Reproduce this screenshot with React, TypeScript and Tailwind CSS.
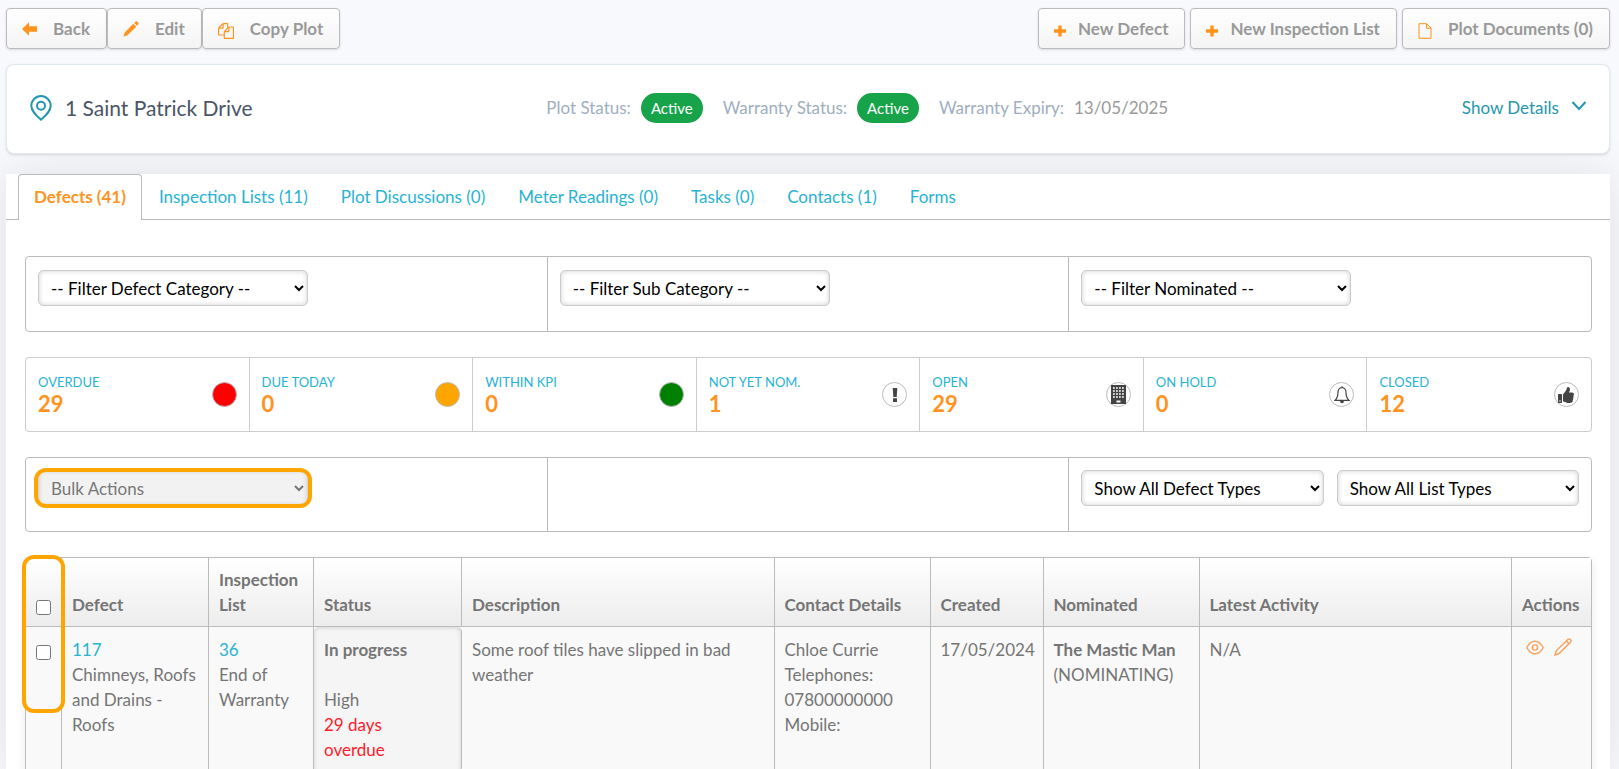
import type { ReactNode } from 'react'
import { FaThumbsUp } from 'react-icons/fa'

const tabs = [
  'Defects (41)',
  'Inspection Lists (11)',
  'Plot Discussions (0)',
  'Meter Readings (0)',
  'Tasks (0)',
  'Contacts (1)',
  'Forms',
]

type Stat = { label: string; value: number; dot: string; icon?: ReactNode }

const stats: Stat[] = [
  { label: 'OVERDUE', value: 29, dot: 'bg-[#ff0000]' },
  { label: 'DUE TODAY', value: 0, dot: 'bg-[#ffa500]' },
  { label: 'WITHIN KPI', value: 0, dot: 'bg-[#008000]' },
  { label: 'NOT YET NOM.', value: 1, dot: 'bg-white', icon: <AlertIcon /> },
  { label: 'OPEN', value: 29, dot: 'bg-white', icon: <BuildingIcon /> },
  { label: 'ON HOLD', value: 0, dot: 'bg-white', icon: <BellIcon /> },
  { label: 'CLOSED', value: 12, dot: 'bg-white', icon: <FaThumbsUp size={16} /> },
]

const th = 'border-r border-b border-[#bbb] px-[10px] py-[9px] align-bottom text-left font-bold last:border-r-0'
const td = 'border-r border-[#bbb] px-[10px] py-[10px] align-top last:border-r-0'

function BackIcon() {
  return (
    <svg width="15" height="14" viewBox="0 0 15 14" fill="currentColor">
      <path d="M0 7 7 .3V4.300H15V9.700H7V13.700Z" />
    </svg>
  )
}

function EditIcon() {
  return (
    <svg width="16" height="16" viewBox="0 0 16 16" fill="currentColor">
      <path d="M10.300 2.700 13.300 5.700 4.400 14.200 .4 15.700 1.700 11.500ZM11.200 1.900 12.700.6Q13.500 0 14.300.7L15.300 1.700Q16 2.500 15.300 3.300L14.100 4.800Z" />
    </svg>
  )
}

function CopyIcon() {
  return (
    <svg className="mt-1" width="16" height="16" viewBox="0 0 1792 1792" fill="currentColor">
      <path d="M1696 384q40 0 68 28t28 68v1216q0 40-28 68t-68 28h-960q-40 0-68-28t-28-68v-288h-544q-40 0-68-28t-28-68v-672q0-40 20-88t48-76l408-408q28-28 76-48t88-20h416q40 0 68 28t28 68v328q68-40 128-40h416zm-544 213l-299 299h299v-299zm-640-384l-299 299h299v-299zm196 647l316-316v-416h-384v416q0 40-28 68t-68 28h-416v640h512v-256q0-40 20-88t48-76zm956 804v-1152h-384v416q0 40-28 68t-68 28h-416v640h896z" />
    </svg>
  )
}

function PlusIcon() {
  return (
    <svg className="mt-1 -mr-1" width="12" height="12" viewBox="0 0 12 12" fill="currentColor">
      <path d="M4.300.5H7.700V4.300H12V7.700H7.700V11.500H4.300V7.700H0V4.300H4.300Z" />
    </svg>
  )
}

function FileIcon() {
  return (
    <svg className="mt-1" width="14" height="16" viewBox="0 0 14 16" fill="none" stroke="currentColor">
      <path d="M1 .7H8.700L13 5V15.300H1ZM8.500 1V5.300H13" />
    </svg>
  )
}

function AlertIcon() {
  return (
    <svg width="6" height="14" viewBox="0 0 6 14" fill="currentColor">
      <path d="M.7 0H5.300L4.700 9H1.300ZM1 10.300H5V14H1Z" />
    </svg>
  )
}

function BuildingIcon() {
  return (
    <svg width="15" height="19" viewBox="0 0 15 19">
      <path d="M0 0H15V19H0Z" fill="#444" />
      <path
        d="M2 3H13M2 6H13M2 9H13M2 12H13"
        stroke="#fff"
        strokeWidth="1.600"
        strokeDasharray="1.800 1.200"
      />
      <path d="M5.500 15.500H9.500V17.500H5.500Z" fill="#fff" />
    </svg>
  )
}

function BellIcon() {
  return (
    <svg width="16" height="18" viewBox="0 0 16 18" fill="none" stroke="#444" strokeWidth="1.200">
      <path d="M8 1.500C5.300 1.900 4 4 4 6.500 4 10.500 3 12.500 1 14.400H15C13 12.500 12 10.500 12 6.500 12 4 10.700 1.900 8 1.500ZM8 .3V1.500" />
      <path d="M6 15H10Q9.800 17.300 8 17.300T6 15Z" fill="#444" stroke="none" />
    </svg>
  )
}

function PinIcon() {
  return (
    <svg width="22" height="26" viewBox="0 0 22 26" fill="none" stroke="#2596b0" strokeWidth="2">
      <path d="M11 24.700C6.500 20.800 1.300 16.500 1.300 10.800A9.700 9.700 0 0 1 20.700 10.800C20.700 16.500 15.500 20.800 11 24.700Z" />
      <circle cx="11" cy="10.800" r="4" />
    </svg>
  )
}

function ToolButton({ icon, children }: { icon: ReactNode; children: ReactNode }) {
  return (
    <button className="flex h-[41px] items-center gap-4 rounded-[4px] border border-[#bbb] bg-gradient-to-b from-white to-[#f4f4f4] pr-4 pl-[15px] font-bold text-[#999] shadow-sm">
      <span className="text-[#ff931e]">{icon}</span>
      {children}
    </button>
  )
}

function Picker({ label, className = '', disabled = false }: { label: string; className?: string; disabled?: boolean }) {
  return (
    <select
      aria-label={label}
      disabled={disabled}
      className={`h-9 rounded-[5px] border border-[#ccc] px-2 shadow-[inset_0_0_5px_rgba(0,0,0,0.2)] ${
        disabled ? 'bg-[#f0f0f0] text-[#555] opacity-80' : 'bg-white text-black'
      } ${className}`}
    >
      <option>{label}</option>
    </select>
  )
}

function Status({ children }: { children: ReactNode }) {
  return (
    <dd className="rounded-full bg-[#16a34a] px-[10px] py-[2px] text-[15px] leading-[26px] text-white">{children}</dd>
  )
}

export default function App() {
  return (
    <div className="min-h-screen overflow-hidden bg-[#f8f9fd] px-[6px] pr-[9px] pt-2 font-['Lato',sans-serif] text-[17px] leading-[25px] text-[#757575]">
      <header className="flex justify-between">
        <div className="flex">
          <ToolButton icon={<BackIcon />}>Back</ToolButton>
          <ToolButton icon={<EditIcon />}>Edit</ToolButton>
          <ToolButton icon={<CopyIcon />}>Copy Plot</ToolButton>
        </div>
        <div className="flex gap-[5px]">
          <ToolButton icon={<PlusIcon />}>New Defect</ToolButton>
          <ToolButton icon={<PlusIcon />}>New Inspection List</ToolButton>
          <ToolButton icon={<FileIcon />}>Plot Documents (0)</ToolButton>
        </div>
      </header>

      <section className="relative z-10 mt-[15px] flex h-[90px] items-center justify-between rounded-lg border border-[#e2e8f0] bg-white pr-[22px] pb-[3px] pl-[23px] shadow-sm">
        <h1 className="flex items-center gap-[13px] text-[21px] text-[#4a5568]">
          <PinIcon />1 Saint Patrick Drive
        </h1>
        <dl className="flex items-center gap-5 text-[#a0aec0]">
          <div className="flex items-center gap-[10px]">
            <dt>Plot Status:</dt>
            <Status>Active</Status>
          </div>
          <div className="flex items-center gap-[10px]">
            <dt>Warranty Status:</dt>
            <Status>Active</Status>
          </div>
          <div className="flex items-center gap-[10px]">
            <dt>Warranty Expiry:</dt>
            <dd className="text-[#999]">13/05/2025</dd>
          </div>
        </dl>
        <button className="flex items-center gap-3 text-[#2596b0]">
          Show Details
          <svg className="mb-1" width="16" height="10" viewBox="0 0 16 10" fill="none" stroke="currentColor" strokeWidth="2">
            <path d="M1.500 1 8 8 14.500 1" />
          </svg>
        </button>
      </section>

      <main className="mt-5 bg-white shadow-[0_0_50px_rgba(0,0,0,0.1)]">
        <nav className="flex h-[46px] border-b border-[#bbb] pl-3">
          {tabs.map((tab, i) => (
            <a
              key={tab}
              href="#"
              className={
                i === 0
                  ? 'mr-px h-[46px] rounded-t-[4px] border border-b-0 border-[#bbb] bg-white px-[15px] pt-[9px] font-bold text-[#ff931e]'
                  : 'mr-px px-4 pt-[10px] text-[#27b3d3]'
              }
            >
              {tab}
            </a>
          ))}
        </nav>

        <div className="flex flex-col gap-[25px] pt-9 pr-[18px] pl-[19px]">
          <div className="grid h-[76px] grid-cols-3 divide-x divide-[#bbb] rounded-[4px] border border-[#bbb]">
            <div className="px-3 pt-[13px]">
              <Picker label="-- Filter Defect Category --" className="w-[270px]" />
            </div>
            <div className="px-3 pt-[13px]">
              <Picker label="-- Filter Sub Category --" className="w-[270px]" />
            </div>
            <div className="px-3 pt-[13px]">
              <Picker label="-- Filter Nominated --" className="w-[270px]" />
            </div>
          </div>

          <div className="grid h-[75px] grid-cols-7 divide-x divide-[#ccc] rounded-[4px] border border-[#ccc]">
            {stats.map((s) => (
              <a key={s.label} href="#" className="flex items-center justify-between px-3">
                <span className="flex flex-col pb-[2px]">
                  <span className="text-[13px] leading-5 text-[#27b3d3]">{s.label}</span>
                  <span className="text-[22px] leading-6 font-bold text-[#ff931e]">{s.value}</span>
                </span>
                <span className={`flex size-[25px] items-center justify-center rounded-full border border-[#bbb] text-[#444] ${s.dot}`}>
                  {s.icon}
                </span>
              </a>
            ))}
          </div>

          <div className="grid h-[75px] grid-cols-3 divide-x divide-[#bbb] rounded-[4px] border border-[#bbb]">
            <div className="px-3 pt-3">
              <div className="relative flex w-[270px]">
                <Picker label="Bulk Actions" className="w-full" disabled />
                <div className="pointer-events-none absolute -inset-x-1 -top-[2px] -bottom-[2px] rounded-xl border-4 border-[#ffa500]" />
              </div>
            </div>
            <div />
            <div className="flex gap-[13px] px-3 pt-3">
              <Picker label="Show All Defect Types" className="flex-1" />
              <Picker label="Show All List Types" className="flex-1" />
            </div>
          </div>

          <div className="relative rounded-t-[4px] border border-[#bbb] shadow-[0_4px_12px_rgba(0,0,0,0.08)]">
            <table className="w-full table-fixed border-separate border-spacing-0 rounded-t-[4px] bg-[#f9f9f9]">
              <colgroup>
                <col className="w-[36px]" />
                <col className="w-[147px]" />
                <col className="w-[105px]" />
                <col className="w-[148px]" />
                <col />
                <col className="w-[156px]" />
                <col className="w-[113px]" />
                <col className="w-[156px]" />
                <col />
                <col className="w-[79px]" />
              </colgroup>
              <thead className="bg-gradient-to-b from-white to-[#ececec]">
                <tr>
                  <th className={th}>
                    <input type="checkbox" aria-label="Select all defects" className="mb-[2px] block size-[15px]" />
                  </th>
                  <th className={th}>Defect</th>
                  <th className={th}>Inspection List</th>
                  <th className={th}>Status</th>
                  <th className={th}>Description</th>
                  <th className={th}>Contact Details</th>
                  <th className={th}>Created</th>
                  <th className={th}>Nominated</th>
                  <th className={th}>Latest Activity</th>
                  <th className={th}>Actions</th>
                </tr>
              </thead>
              <tbody>
                <tr>
                  <td className={td}>
                    <input type="checkbox" aria-label="Select defect 117" className="mt-2 block size-[15px]" />
                  </td>
                  <td className={td}>
                    <a href="#" className="block text-[#27b3d3]">117</a>
                    Chimneys, Roofs and Drains - Roofs
                  </td>
                  <td className={td}>
                    <a href="#" className="block text-[#27b3d3]">36</a>
                    End of Warranty
                  </td>
                  <td className={`${td} rounded-[5px] bg-[#f5f5f5] shadow-[inset_0_1px_4px_rgba(0,0,0,0.14)]`}>
                    <b className="mb-[25px] block">In progress</b>
                    High
                    <span className="block w-20 text-[#ff1a2b]">29 days overdue</span>
                  </td>
                  <td className={td}>Some roof tiles have slipped in bad weather</td>
                  <td className={td}>
                    Chloe Currie
                    <br />
                    Telephones:
                    <br />
                    07800000000
                    <br />
                    Mobile:
                  </td>
                  <td className={td}>17/05/2024</td>
                  <td className={td}>
                    <b className="block">The Mastic Man</b>
                    (NOMINATING)
                  </td>
                  <td className={td}>N/A</td>
                  <td className={td}>
                    <div className="flex items-center gap-[10px] pt-px pl-1 text-[#f9a05c]">
                      <button aria-label="View defect">
                        <svg width="18" height="15" viewBox="0 0 18 15" fill="none" stroke="currentColor" strokeWidth="1.400">
                          <path d="M.8 7.500Q4 1.200 9 1.200T17.200 7.500Q14 13.800 9 13.800T.8 7.500Z" />
                          <circle cx="9" cy="7.500" r="2.600" />
                        </svg>
                      </button>
                      <button aria-label="Edit defect">
                        <svg width="18" height="18" viewBox="0 0 18 18" fill="none" stroke="currentColor" strokeWidth="1.400">
                          <path d="M1 17 2.200 12.800 13.800 1.400Q15 .4 16.300 1.600T16.500 4.200L5 15.600ZM12.300 3 15 5.700" />
                        </svg>
                      </button>
                    </div>
                  </td>
                </tr>
              </tbody>
            </table>
            <div className="pointer-events-none absolute -top-[3px] -left-1 h-[158px] w-[43px] rounded-xl border-4 border-[#ffa500]" />
          </div>
        </div>
      </main>
    </div>
  )
}
